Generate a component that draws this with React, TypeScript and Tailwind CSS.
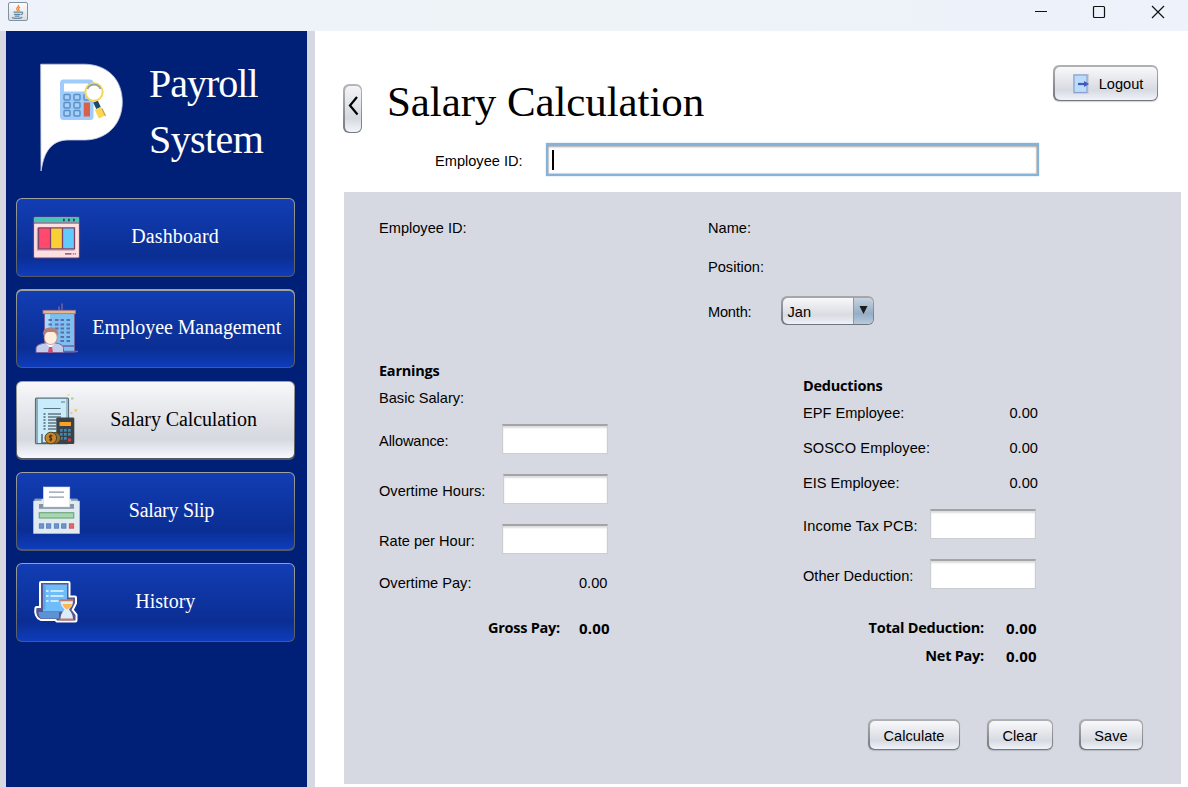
import React from "react";

const SERIF = "font-['Liberation_Serif',serif]";

function JavaIcon() {
  return (
    <svg width="20" height="20" viewBox="0 0 20 20">
      <defs>
        <linearGradient id="jv" x1="0" y1="0" x2="0" y2="1">
          <stop offset="0" stopColor="#fdfdfd" />
          <stop offset="1" stopColor="#d9dde0" />
        </linearGradient>
      </defs>
      <rect x="0.5" y="0.5" width="19" height="18" rx="1.5" fill="url(#jv)" stroke="#7f929f" />
      <path d="M10.5 3c1 1.6-2.6 2.8-1.7 4.4.3.7 1 1 1 1.8M12 5.2c-1.6.8-2 1.6-1 2.6.4.5 0 1-.3 1.3" fill="none" stroke="#f08a3c" strokeWidth="1.3" />
      <path d="M5.5 10.2h7.5M6 12.3h6.3M6.8 14.2h4.7M13 10.2c2.3-.5 2.2 2-.3 2.4M4 15.5c1.5 1.2 8.5 1.2 10.3-.2" fill="none" stroke="#5f86a3" strokeWidth="1.2" />
    </svg>
  );
}

function Logo() {
  return (
    <svg className="shrink-0" width="84" height="110" viewBox="40 62 84 110">
      <path d="M40.7 64.2H84C107 64.2 122.300 79 122.300 102C122.300 125 106 139.800 85 140H68C54 140 45.500 149 42.200 165L41 171Z" fill="#fff" stroke="#c3c9e0" strokeWidth="0.8" />
      <rect x="60" y="79.5" width="33.5" height="40.5" rx="3.5" fill="#9fccfb" />
      <rect x="64" y="83.5" width="24" height="8" fill="#fff" />
      <g fill="#a9d0f7" stroke="#5a8fc7" strokeWidth="1.5">
        <rect x="64" y="94.5" width="6" height="5.5" rx="1" />
        <rect x="74" y="94.5" width="6" height="5.5" rx="1" />
        <rect x="84" y="94.5" width="5" height="5.5" rx="1" />
        <rect x="64" y="102.5" width="6" height="5.5" rx="1" />
        <rect x="74" y="102.5" width="6" height="5.5" rx="1" />
        <rect x="64" y="110.5" width="6" height="5.5" rx="1" />
        <rect x="74" y="110.5" width="6" height="5.5" rx="1" />
      </g>
      <rect x="83.7" y="102.5" width="6.3" height="14" fill="#d9604b" />
      <path d="M95.5 101.5L98.5 108" stroke="#1e4a6e" strokeWidth="5" />
      <path d="M98 108.5L102 117" stroke="#fbd64f" strokeWidth="7" />
      <path d="M102 108.5L105.5 116" stroke="#b9a15a" strokeWidth="1.2" />
      <circle cx="94" cy="92" r="8.7" fill="#fff" stroke="#f6d658" strokeWidth="2" />
      <path d="M87.5 89a7 7 0 0 1 13 0" fill="none" stroke="#8fa0a0" strokeWidth="1.6" />
    </svg>
  );
}

const iconProps = { width: 48, height: 48, viewBox: "0 0 48 48", overflow: "visible", className: "shrink-0" } as const;

function DashboardIcon() {
  return (
    <svg {...iconProps}>
      <rect x="1.5" y="3" width="46" height="41" rx="1.5" fill="#ffe0e0" stroke="#6d3a72" strokeWidth="1.2" />
      <path d="M2 3.500h45v5H2z" fill="#45c5b3" />
      <path d="M2 9h45" stroke="#6d3a72" />
      <path d="M31 6h1.800M36 6h1.800M41 6h1.800" stroke="#4c3566" strokeWidth="2.4" />
      <path d="M5.500 14v22h37" fill="none" stroke="#c9a6bb" strokeWidth="1.5" />
      <rect x="6.5" y="13.800" width="12" height="21" fill="#ff4a6e" />
      <rect x="18.5" y="13.800" width="12" height="21" fill="#f9cf35" />
      <rect x="30.5" y="13.800" width="12" height="21" fill="#62caff" />
      <path d="M6.500 13.800h36v21h-36zM18.500 14v21M30.500 14v21" fill="none" stroke="#7c4368" strokeWidth="1.3" />
      <path d="M33 39.800h6.500M40.800 39.800h1M42.800 39.800h1" stroke="#6d3a72" strokeWidth="1.3" />
    </svg>
  );
}

function EmployeeIcon() {
  return (
    <svg {...iconProps}>
      <path d="M30 -1.500V5M27 1.500V5" stroke="#76609f" strokeWidth="1.5" />
      <rect x="12.5" y="8" width="30" height="39" fill="#7cbff0" stroke="#76609f" />
      <rect x="13" y="8.500" width="5" height="20" fill="#a5dcfb" />
      <rect x="11" y="5.300" width="32.5" height="3.400" fill="#e5b789" stroke="#9a7791" strokeWidth="0.8" />
      <path
        d="M16.500 15h3.500M16.500 19.500h3.500M23 15h3.500M23 19.500h3.500M23 23.500h3.500M28.500 15h3.500M28.500 19.500h3.500M28.500 23.500h3.500M28.500 27.500h3.500M28.500 32h3.500M28.500 36h3.500M34.500 15h3.500M34.500 19.500h3.500M34.500 23.500h3.500M34.500 27.500h3.500M34.500 32h3.500M34.500 36h3.500"
        stroke="#5c6ea9"
        strokeWidth="2.2"
      />
      <path d="M30 41h12M30 46.500h16" stroke="#76609f" strokeWidth="1.5" />
      <path d="M4 47.500v-4c0-4 6-5 9.500-5.500h10c4 .5 8 2 8 5.500v4z" fill="#c3cdea" stroke="#76609f" />
      <path d="M14 38l4.500 5 4.500-5z" fill="#fff" />
      <path d="M17 42h3l1 5.500h-5z" fill="#d24d6c" />
      <ellipse cx="18.7" cy="32.5" rx="6.5" ry="7" fill="#fdeedd" stroke="#b78a84" strokeWidth="0.8" />
      <path d="M11.500 31c-1.500-6 2-8.500 7-8.500s9 2.500 7.500 8.500c-1.500-3.500-2-4-7.500-4s-6 1-7 4z" fill="#b08079" />
    </svg>
  );
}

function CalculationIcon() {
  return (
    <svg {...iconProps}>
      <rect x="3.5" y="2.200" width="33" height="45.5" rx="1" fill="#c8ecfb" stroke="#56707d" strokeWidth="1.2" />
      <path d="M5 3v44" stroke="#8fa9b5" strokeWidth="2" />
      <path d="M35 3v20" stroke="#a1bac5" strokeWidth="2" />
      <path d="M29 6h4M11.500 12.500h17" stroke="#5c7480" strokeWidth="1.2" />
      <path d="M12.500 17v17" stroke="#6f858f" strokeWidth="2" strokeDasharray="2 1" />
      <path d="M16 18h13M16 21h13M16 24h9M16 27h8M16 30h8M16 33h8" stroke="#7d949f" strokeWidth="2.2" />
      <path d="M10 38v9h7" fill="none" stroke="#4c5c66" strokeWidth="1.4" />
      <rect x="24.3" y="21.500" width="18" height="26.5" rx="1.2" fill="#3a4147" />
      <rect x="27.5" y="26" width="11.5" height="4" fill="#f8a326" />
      <g fill="#3b8cb5">
        <rect x="28" y="33" width="2.7" height="2.7" />
        <rect x="32" y="33" width="2.7" height="2.7" />
        <rect x="36" y="33" width="2.7" height="2.7" />
        <rect x="28" y="37" width="2.7" height="2.7" />
        <rect x="32" y="37" width="2.7" height="2.7" />
        <rect x="36" y="37" width="2.7" height="2.7" />
        <rect x="28" y="41" width="2.7" height="2.7" />
        <rect x="32" y="41" width="2.7" height="2.7" />
      </g>
      <rect x="36" y="42.500" width="3" height="3" fill="#d63f45" />
      <circle cx="23" cy="42" r="5.5" fill="#98702b" stroke="#4b4233" />
      <circle cx="18.8" cy="42" r="5.8" fill="#c9852a" stroke="#544428" strokeWidth="1" />
      <path d="M20.500 40c-3-1.200-4 .8-2 1.800s2 3-1.500 2M18.800 38.500v7" stroke="#4a3516" strokeWidth="1.1" fill="none" />
      <rect x="35.500" y="-2" width="2" height="2" fill="#f8dc96" />
      <rect x="39" y="1.500" width="2.5" height="2" fill="#8ede8c" />
      <rect x="42.500" y="13" width="2.5" height="2.5" fill="#f4cc4d" />
      <rect x="38.500" y="16" width="2" height="2" fill="#eeb9bf" />
    </svg>
  );
}

function SlipIcon() {
  return (
    <svg {...iconProps}>
      <path d="M3 12h42v2h2.500v32.500H1.500V14H3z" fill="#e1eaf1" stroke="#b9cbdc" strokeWidth="0.6" />
      <path d="M2.500 12.800h7M39 12.800h7" stroke="#8899a8" strokeWidth="1.8" />
      <rect x="7" y="17" width="35" height="4.8" fill="#8495a4" />
      <rect x="11.300" y="0" width="26.5" height="20" fill="#fff" stroke="#cdd6e2" strokeWidth="0.6" />
      <path d="M17 5.200h15M17 10.200h15" stroke="#8a9bab" strokeWidth="1.2" />
      <rect x="7.300" y="25.700" width="34.4" height="5.300" fill="#a9d6b1" stroke="#6fa982" strokeWidth="1.2" />
      <g fill="#6c96d2" stroke="#527cb8" strokeWidth="0.8">
        <rect x="7.300" y="36.800" width="4.4" height="4.4" />
        <rect x="14.400" y="36.800" width="4.4" height="4.4" />
        <rect x="22.300" y="36.800" width="4.4" height="4.4" />
        <rect x="29.600" y="36.800" width="4.4" height="4.4" />
      </g>
      <rect x="37.300" y="36.800" width="4.4" height="4.4" fill="#e2696b" stroke="#c94c50" strokeWidth="0.8" />
    </svg>
  );
}

function HistoryIcon() {
  const outline = "M9 4h27.500v14.500h6.500v5.500l-3.500 7 4 5v5.500H25l-1-1.500H9c-4-1.500-5.500-6-4.500-11h4.500z";
  return (
    <svg {...iconProps}>
      <path d={outline} fill="#fff" stroke="#fff" strokeWidth="4" strokeLinejoin="round" />
      <path d={outline} fill="#57558a" strokeLinejoin="round" />
      <path d="M11 5.500h24v27h-24z" fill="#6fbcfa" />
      <path d="M11 5.500h2.500v25h-2.500z" fill="#5aa7ef" />
      <path d="M6.500 33H27v6.500H10c-2.500-.5-3.500-3.500-3.500-6.500z" fill="#5c93d4" />
      <path d="M14 12h2.500M18.500 12h13M14 17h2.500M18.500 17h13M14 22h2.500M18.500 22h8" stroke="#c9e9ff" strokeWidth="2" />
      <path d="M28.500 22H41c0 5-2.500 6.500-4 8.500 1.500 2 4 4.500 4 9.500H28.500c0-5 2.500-7.500 4-9.500-1.500-2-4-3.500-4-8.500z" fill="#d9edfb" />
      <path d="M30.500 25h9.500c-.5 3-3 4-5 5.500-2-1.500-4-2.500-4.500-5.500z" fill="#fdb750" />
      <path d="M27.500 21.300h14M27.500 40.500h14" stroke="#c67a62" strokeWidth="2" />
    </svg>
  );
}

function LogoutIcon() {
  return (
    <svg className="shrink-0" width="18" height="21" viewBox="0 0 18 21">
      <rect x="0" y="0" width="16" height="20" fill="#cfd2dc" />
      <rect x="1" y="1" width="13" height="17.500" fill="#b9defa" stroke="#8f9fd2" strokeWidth="1.2" />
      <path d="M5 10h9" stroke="#4457bb" strokeWidth="2.2" fill="none" />
      <path d="M11 7l5 3-5 3z" fill="#4457bb" />
    </svg>
  );
}

type NavItem = { label: string; icon: React.ReactNode; offset: string; active?: boolean };

const navItems: NavItem[] = [
  { label: "Dashboard", icon: <DashboardIcon />, offset: "ml-[51px] tracking-[0.1px]" },
  { label: "Employee Management", icon: <EmployeeIcon />, offset: "ml-[12px] tracking-[-0.08px]" },
  { label: "Salary Calculation", icon: <CalculationIcon />, offset: "ml-[30px] tracking-[-0.1px]", active: true },
  { label: "Salary Slip", icon: <SlipIcon />, offset: "ml-[48.5px] tracking-[-0.28px]" },
  { label: "History", icon: <HistoryIcon />, offset: "ml-[55px]" },
];

function NavButton({ label, icon, offset, active }: NavItem) {
  const tone = active
    ? "text-black from-[#f8f8fa] via-[#d5d8df] to-[#f7f9ff]"
    : "text-white from-[#123db4] via-[#0a2e93] to-[#0e3cbb]";
  return (
    <div className="h-[79px] rounded-[6px] bg-linear-to-b from-[#a0a29c] to-[#55595f] p-[1.3px]">
      <button className={`flex h-full w-full items-center rounded-[5px] bg-linear-to-b via-75% pl-[15px] text-left text-[20px] ${SERIF} ${tone}`}>
        {icon}
        <span className={`-mt-[3px] whitespace-nowrap ${offset}`}>{label}</span>
      </button>
    </div>
  );
}

function NimbusButton({ size, children }: { size: string; children: React.ReactNode }) {
  return (
    <div className={`shrink-0 rounded-[6px] bg-linear-to-b from-[#b0b2b5] to-[#73777d] p-[1.5px] shadow-[0_1px_1px_rgba(120,125,135,0.35)] ${size}`}>
      <button className="flex h-full w-full items-center justify-center whitespace-nowrap rounded-[5px] bg-linear-to-b from-[#f9f9fb] via-[#d7dae1] via-70% to-[#f0f3fa] pt-[2px]">
        {children}
      </button>
    </div>
  );
}

function Field({ size }: { size: string }) {
  return (
    <input
      className={`mb-[5px] h-[30px] shrink-0 border border-t-2 border-[#cccdd0] border-t-[#a3a4a8] bg-white shadow-[inset_0_2px_2px_#dddddf] outline-none ${size}`}
    />
  );
}

function Row({ h, children }: { h: string; children: React.ReactNode }) {
  return <div className={`flex shrink-0 items-center whitespace-nowrap ${h}`}>{children}</div>;
}

const BOLD = "font-['Open_Sans',sans-serif] font-bold text-[14.5px] tracking-[-0.25px]";
const BOLD_NUM = "font-['Open_Sans',sans-serif] font-bold text-[15px] tracking-[0.15px]";

export default function App() {
  return (
    <div className="flex h-[787px] w-[1188px] flex-col overflow-hidden bg-white font-['Liberation_Sans',sans-serif] text-[14.6px] leading-[20px] text-black">
      <header className="flex h-[31px] shrink-0 items-start bg-linear-to-r from-[#eef3fb] via-[#eef3f8] to-[#edf2fb] pl-[8px] pr-[23px] pt-[2px]">
        <JavaIcon />
        <div className="ml-auto flex gap-[45px] pt-[3px]">
          <svg width="14" height="14" viewBox="0 0 14 14"><path d="M2 6.500h12" stroke="#111" /></svg>
          <svg width="14" height="14" viewBox="0 0 14 14"><rect x="1.500" y="1.500" width="11" height="11" rx="1" fill="none" stroke="#111" strokeWidth="1.2" /></svg>
          <svg width="14" height="14" viewBox="0 0 14 14"><path d="M1 1l12 12M13 1L1 13" stroke="#111" strokeWidth="1.2" /></svg>
        </div>
      </header>

      <div className="flex min-h-0 flex-1">
        <aside className="flex w-[315px] shrink-0 flex-col border-l-[6px] border-r-[8px] border-[#d6d9e1] bg-[#002078]">
          <div className="flex h-[167px] shrink-0 pl-[34px] pt-[31px]">
            <Logo />
            <div className={`ml-[25px] -mt-[6px] text-[40px] leading-[56px] text-white ${SERIF}`}>
              <div className="tracking-[-1px]">Payroll</div>
              <div className="tracking-[-0.6px]">System</div>
            </div>
          </div>
          <nav className="flex flex-col gap-[12.25px] pl-[10px] pr-[12px]">
            {navItems.map((item) => (
              <NavButton key={item.label} {...item} />
            ))}
          </nav>
        </aside>

        <main className="flex flex-1 flex-col pl-[29px]">
          <div className="flex h-[110px] shrink-0 pr-[30px]">
            <div className="-ml-[1px] mt-[53px] h-[49px] w-[19px] rounded-[6px] bg-linear-to-b from-[#b5b7ba] to-[#75787e] p-[1.5px]">
              <button className="flex h-full w-full items-center justify-center rounded-[5px] bg-linear-to-b from-[#f4f4f6] via-[#d5d8df] via-70% to-[#f2f5fc] pb-[5px]">
                <svg width="12" height="22" viewBox="0 0 12 22"><path d="M10 2L3 10.500L10.500 19.500" fill="none" stroke="#000" strokeWidth="2.2" /></svg>
              </button>
            </div>
            <h1 className={`ml-[25px] mt-[46px] whitespace-nowrap text-[43px] leading-[50px] tracking-[-0.1px] ${SERIF}`}>Salary Calculation</h1>
            <div className="ml-auto pt-[34px]">
              <NimbusButton size="h-[36px] w-[105px]">
                <span className="flex items-center gap-[8px] pl-[5px]">
                  <LogoutIcon />
                  Logout
                </span>
              </NimbusButton>
            </div>
          </div>
          <div className="flex h-[51px] shrink-0 pl-[91px]">
            <label className="w-[111px] pt-[10px]">Employee ID:</label>
            <div className="mt-[2px] flex h-[33px] w-[493px] items-center border-2 border-[#86b1d8] bg-white pl-[4px] shadow-[inset_0_2px_2px_#a8a8a8,inset_0_0_1px_1px_#d2d2d2,0_0_1px_#86b1d8]">
              <span className="h-[20px] w-[2px] bg-black" />
            </div>
          </div>

          <section className="flex h-[592px] w-[837px] shrink-0 flex-col bg-[#d6d9e1] pl-[35px] pt-[16px]">
            <div className="flex">
              <div className="w-[329px]">
                <Row h="h-[40px]">Employee ID:</Row>
              </div>
              <div>
                <Row h="h-[40px]">Name:</Row>
                <Row h="h-[38px]">Position:</Row>
                <Row h="h-[50px]">
                  <span className="w-[73px] pt-[2px] tracking-[-0.2px]">Month:</span>
                  <div className="mb-[1px] h-[29px] w-[93px] rounded-[6px] bg-linear-to-b from-[#a6a8ac] to-[#6d747d] p-[1.5px]">
                    <div className="flex h-full overflow-hidden rounded-[5px] bg-linear-to-b from-[#f8f8fa] via-[#dadce2] via-65% to-[#eef1f8]">
                      <span className="flex-1 pl-[5px] pt-[4px]">Jan</span>
                      <span className="flex w-[20px] items-center justify-center border-l border-[#8a9aac] bg-linear-to-b from-[#c8d3de] via-[#95adc5] via-60% to-[#b7cadd] pb-[1px]">
                        <svg width="9" height="8" viewBox="0 0 9 8"><path d="M0.500 0h8L4.500 8z" fill="#1c1c1c" /></svg>
                      </span>
                    </div>
                  </div>
                </Row>
              </div>
            </div>

            <div className="flex h-[382px] shrink-0">
              <div className="w-[424px] pt-[20px]">
                <Row h="h-[30px]"><span className={BOLD}>Earnings</span></Row>
                <Row h="h-[24px]">Basic Salary:</Row>
                <Row h="h-[62px]"><span className="w-[123px] tracking-[-0.1px]">Allowance:</span><Field size="w-[106px]" /></Row>
                <Row h="h-[38px]"><span className="w-[124px]">Overtime Hours:</span><Field size="w-[105px]" /></Row>
                <Row h="h-[62px]"><span className="w-[123px]">Rate per Hour:</span><Field size="w-[106px]" /></Row>
                <Row h="h-[22px]"><span className="w-[200px]">Overtime Pay:</span>0.00</Row>
                <Row h="h-[68px]">
                  <span className={`w-[181px] text-right ${BOLD}`}>Gross Pay:</span>
                  <span className={`ml-[19px] ${BOLD_NUM}`}>0.00</span>
                </Row>
              </div>
              <div className="w-[240px] pt-[36px]">
                <Row h="h-[28px]"><span className={BOLD}>Deductions</span></Row>
                <Row h="h-[26px]"><span className="w-[206.5px]">EPF Employee:</span>0.00</Row>
                <Row h="h-[44px]"><span className="w-[206.5px] tracking-[0.1px]">SOSCO Employee:</span>0.00</Row>
                <Row h="h-[26px]"><span className="w-[206.5px]">EIS Employee:</span>0.00</Row>
                <Row h="h-[60px]"><span className="w-[127px] tracking-[0.15px]">Income Tax PCB:</span><Field size="w-[106px]" /></Row>
                <Row h="h-[40px]"><span className="w-[127px]">Other Deduction:</span><Field size="w-[106px]" /></Row>
                <div className="pt-[18px]">
                  <Row h="h-[28px]">
                    <span className={`w-[181px] text-right ${BOLD}`}>Total Deduction:</span>
                    <span className={`ml-[22px] ${BOLD_NUM}`}>0.00</span>
                  </Row>
                  <Row h="h-[28px]">
                    <span className={`w-[181px] text-right ${BOLD}`}>Net Pay:</span>
                    <span className={`ml-[22px] ${BOLD_NUM}`}>0.00</span>
                  </Row>
                </div>
              </div>
            </div>

            <div className="flex justify-end pr-[38px] pt-[1px]">
              <NimbusButton size="h-[31px] w-[92px]">Calculate</NimbusButton>
              <div className="w-[27px]" />
              <NimbusButton size="h-[31px] w-[66px]">Clear</NimbusButton>
              <div className="w-[26px]" />
              <NimbusButton size="h-[31px] w-[64px]">Save</NimbusButton>
            </div>
          </section>
        </main>
      </div>
    </div>
  );
}
